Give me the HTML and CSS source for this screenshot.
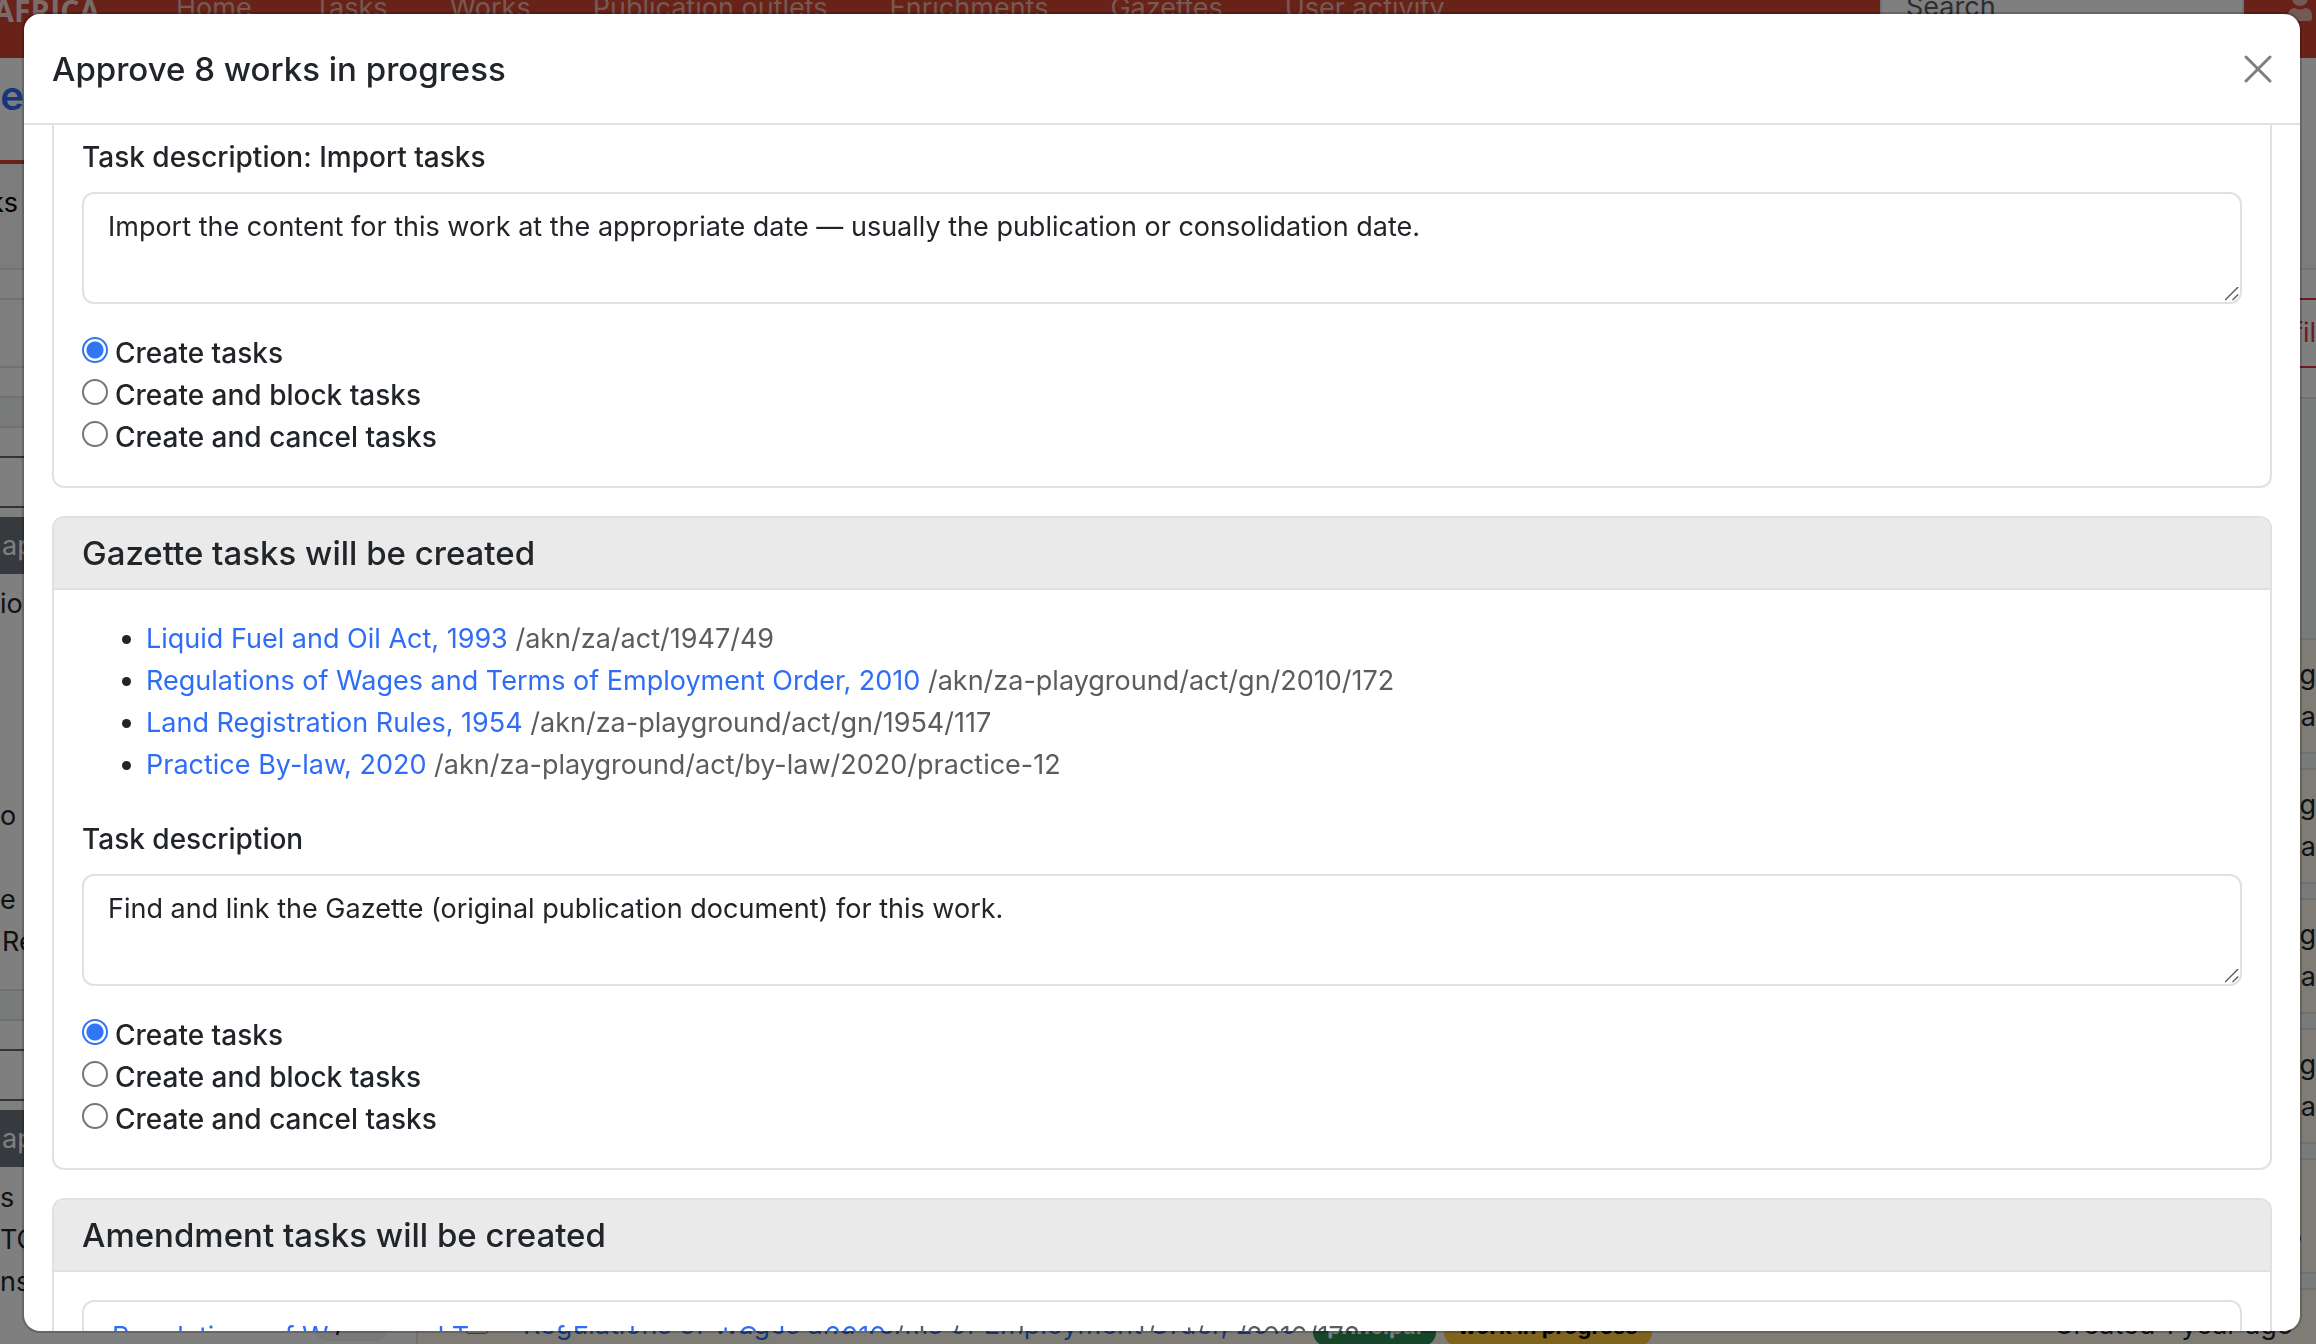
FILE: index.html
```
<!DOCTYPE html>
<html lang="en">
<head>
<meta charset="utf-8">
<title>Approve works in progress</title>
<link rel="stylesheet" href="styles.css">
</head>
<body>
<div class="page">
  <header class="navbar">
    <span class="brand">AFRICA</span>
    <nav class="nav">
      <a href="#">Home</a><a href="#">Tasks</a><a href="#">Works</a><a href="#">Publication outlets</a><a href="#">Enrichments</a><a href="#">Gazettes</a><a href="#">User activity</a>
    </nav>
    <input class="search" type="text" placeholder="Search" aria-label="Search">
    <svg class="user" viewBox="0 0 24 34"><circle cx="12" cy="11" r="8"/><path d="M0 30Q0 21 7 21Q12 24 17 21Q24 21 24 30V31Q24 34 21 34H3Q0 34 0 31Z"/></svg>
  </header>
  <div class="place"><a href="#">ce</a></div>
  <div class="tabs"><a href="#">ks</a></div>
  <div class="columns">
    <aside class="filters">
      <div class="blank"></div>
      <div class="panel"></div>
      <div class="blank"></div>
      <div class="bar"></div>
      <div class="field"></div>
      <div class="chip">ap</div>
      <div class="group roomy"><p>ion</p></div>
      <div class="group"><p>o</p></div>
      <div class="group compact"><p>e</p><p class="indent">Re</p></div>
      <div class="bar"></div>
      <div class="field"></div>
      <div class="chip">ap</div>
      <div class="group list"><p>s</p><p>TO</p><p>ns</p><p class="total"><span class="count">2,656</span></p></div>
    </aside>
    <section class="results">
      <div class="blank"></div>
      <div class="toolbar"><button class="danger" type="button">fil</button></div>
      <div class="summary"></div>
      <div class="work"><span>ag</span><span>a</span></div>
      <div class="work"><span>ag</span><span>a</span></div>
      <div class="work"><span>ag</span><span>a</span></div>
      <div class="work"><span>ag</span><span>a</span></div>
      <div class="work single"><span>o</span></div>
      <div class="work latest">
        <div class="pick"><input type="checkbox" aria-label="Select work"></div>
        <a href="#">Regulations of Wages and Terms of Employment Order, 2010</a>
        <b class="tag green">principal</b>
        <b class="tag amber">work in progress</b>
        <span class="created">Created 1 year ago</span>
      </div>
    </section>
  </div>
</div>
<div class="backdrop"></div>
<div class="modal" role="dialog" aria-modal="true" aria-labelledby="title">
  <header class="modal-header">
    <h1 id="title">Approve 8 works in progress</h1>
    <button class="close" type="button" aria-label="Close"><svg viewBox="0 0 28 28"><path d="M2 2L26 26M26 2L2 26"/></svg></button>
  </header>
  <div class="modal-body">
    <section class="card continued">
      <div class="card-body">
        <label class="label" for="import-text">Task description: Import tasks</label>
        <textarea id="import-text">Import the content for this work at the appropriate date — usually the publication or consolidation date.</textarea>
        <div class="choices">
          <label><input type="radio" name="import" checked>Create tasks</label>
          <label><input type="radio" name="import">Create and block tasks</label>
          <label><input type="radio" name="import">Create and cancel tasks</label>
        </div>
      </div>
    </section>
    <section class="card">
      <h2>Gazette tasks will be created</h2>
      <div class="card-body">
        <ul>
          <li><a href="#">Liquid Fuel and Oil Act, 1993</a> <span>/akn/za/act/1947/49</span></li>
          <li><a href="#">Regulations of Wages and Terms of Employment Order, 2010</a> <span>/akn/za-playground/act/gn/2010/172</span></li>
          <li><a href="#">Land Registration Rules, 1954</a> <span>/akn/za-playground/act/gn/1954/117</span></li>
          <li><a href="#">Practice By-law, 2020</a> <span>/akn/za-playground/act/by-law/2020/practice-12</span></li>
        </ul>
        <label class="label" for="gazette-text">Task description</label>
        <textarea id="gazette-text">Find and link the Gazette (original publication document) for this work.</textarea>
        <div class="choices">
          <label><input type="radio" name="gazette" checked>Create tasks</label>
          <label><input type="radio" name="gazette">Create and block tasks</label>
          <label><input type="radio" name="gazette">Create and cancel tasks</label>
        </div>
      </div>
    </section>
    <section class="card">
      <h2>Amendment tasks will be created</h2>
      <div class="card-body">
        <div class="card inner"><a href="#">Regulations of Wages and Terms of Employment Order, 2010</a> <span>/akn/za-playground/act/gn/2010/172</span></div>
      </div>
    </section>
  </div>
</div>
</body>
</html>
```
FILE: styles.css
```
* { box-sizing: border-box; }
body { margin: 0; height: 100vh; overflow: hidden; font: 27px/42px Inter, "Liberation Sans", sans-serif; color: #212529; background: #fff; }
a { color: #2f6df6; text-decoration: none; }
p { margin: 0; }

/* Page behind the dialog */
.page { height: 100vh; overflow: hidden; }
.navbar { display: flex; align-items: flex-start; height: 58px; padding-right: 4px; background: #d1442f; color: #fff; }
.brand { display: flex; flex: none; justify-content: flex-end; width: 176px; padding-right: 76px; font: 700 30px/22px "Open Sans", sans-serif; color: #fffc; }
.nav { display: flex; flex: 1; gap: 62px; line-height: 16px; }
.nav a { color: #fff9; white-space: nowrap; }
.search { width: 364px; height: 24px; margin-right: 44px; padding: 0 24px 10px; border: 2px solid #dee2e6; border-top: 0; font: inherit; line-height: 14px; }
.search::placeholder { color: #595c5f; }
.user { width: 24px; height: 34px; margin-top: -13px; fill: #e6b5ae; }
.place { height: 102px; padding-top: 14px; font-size: 40px; font-weight: 600; line-height: 48px; }
.place a { display: flex; justify-content: flex-end; width: 24px; }
.tabs { height: 110px; background: #f8f9fa; border-bottom: 2px solid #dee2e6; }
.tabs a { display: flex; justify-content: flex-end; width: 24px; padding: 18px 6px 0 0; border-top: 4px solid #d1442f; color: #000; }
.columns { display: flex; }
.filters { flex: none; width: 418px; border-right: 2px solid #dee2e6; }
.results { flex: 1; min-width: 0; background: #f3f4f5; }
.blank { height: 28px; background: #fff; }
.panel { height: 70px; border: 2px solid #dee2e6; border-width: 2px 0; }
.bar { height: 32px; background: #f3f4f5; border: 2px solid #dee2e6; border-width: 2px 0; }
.field { height: 52px; margin: 28px 0 9px; border: 2px solid #666; border-width: 2px 0; }
.chip { height: 57px; padding: 8px 2px; background: #6c757d; color: #fff; }
.group { height: 84px; }
.group.roomy { height: 221px; padding-top: 9px; }
.group.compact { height: 110px; }
.group.list { padding-top: 10px; height: 178px; }
.indent { padding-left: 2px; }
.total { display: flex; justify-content: flex-end; padding-right: 29px; }
.count { height: 38px; padding: 0 8px; border-radius: 12px; background: #f0f1f3; font-size: 20px; font-weight: 600; line-height: 42px; color: #000; }
.toolbar { height: 101px; background: #fff; border-bottom: 2px solid #dee2e6; }
.danger { display: block; width: 100%; height: 70px; padding: 0; border: 2px solid #dc3545; border-width: 2px 0; background: none; font: inherit; text-align: right; color: #dc3545; }
.summary { height: 239px; }
.work { display: flex; flex-direction: column; align-items: flex-end; height: 116px; margin-bottom: 14px; padding-top: 14px; border: 2px solid #dee2e6; border-width: 2px 0; background: #fff9ea; }
.work.single { padding: 56px 14px 0 0; }
.work.latest { flex-direction: row; align-items: flex-start; padding: 14px 23px 0 0; }
.pick { width: 90px; height: 100px; padding-left: 48px; }
.pick input { width: 22px; height: 22px; margin: 8px 0 0; }
.latest a { margin: 0 16px 0 15px; white-space: nowrap; }
.tag { height: 42px; margin-right: 8px; padding: 0 14px; border-radius: 14px; font-size: 22px; line-height: 44px; white-space: nowrap; }
.green { background: #2f8a53; color: #fff; }
.amber { background: #ffc93c; color: #000; }
.created { margin-left: auto; }

/* Dialog */
.backdrop { position: fixed; inset: 0; background: #00000080; }
.modal { position: fixed; inset: 14px 16px 13px 24px; display: flex; flex-direction: column; overflow: hidden; background: #fff; border-radius: 16px; box-shadow: 0 0 0 2px #0003; }
.modal-header { display: flex; flex: none; align-items: center; justify-content: space-between; height: 111px; padding: 0 28px; border-bottom: 2px solid #dee2e6; }
h1, h2 { margin: 0; font-size: 33px; font-weight: 500; line-height: 42px; }
.close { width: 28px; height: 28px; padding: 0; border: 0; background: none; }
.close svg { display: block; stroke: #7f7f7f; stroke-width: 3; stroke-linecap: round; }
.modal-body { flex: 1; min-height: 0; overflow: hidden; padding: 0 28px; }
.card { margin-bottom: 28px; border: 2px solid #dee2e6; border-radius: 12px; overflow: hidden; }
.card.continued { border-top: 0; border-radius: 0 0 12px 12px; }
h2 { padding: 14px 28px; background: #eaeaea; border-bottom: 2px solid #dee2e6; }
.card-body { padding: 28px; }
.continued .card-body { padding-top: 11px; }
.label { display: block; margin-bottom: 14px; font-size: 28px; font-weight: 500; }
textarea { display: block; width: 100%; height: 112px; margin: 0; padding: 12px 24px; border: 2px solid #dee2e6; border-radius: 12px; font: inherit; color: inherit; overflow: hidden; }
textarea::-webkit-resizer { background: url("data:image/svg+xml,%3Csvg xmlns='http://www.w3.org/2000/svg' viewBox='0 0 16 16'%3E%3Cpath d='M0 14L14 0M8 14L14 8' stroke='%23555' stroke-width='1.5'/%3E%3C/svg%3E") no-repeat right bottom / 100%; }
.choices { margin-top: 28px; font-size: 28px; font-weight: 500; }
.choices label { display: flex; align-items: center; gap: 7px; }
.choices input { appearance: none; width: 26px; height: 26px; margin: 0 0 6px; border: 2px solid #767676; border-radius: 50%; background: #fff; }
.choices input:checked { border-color: #2f75f6; background: radial-gradient(circle, #2f75f6 8px, #fff 9px); }
ul { margin: 0 0 32px; padding-left: 64px; }
li span, .inner span { color: #5a5d60; }
.inner { padding: 14px 28px; }
```
